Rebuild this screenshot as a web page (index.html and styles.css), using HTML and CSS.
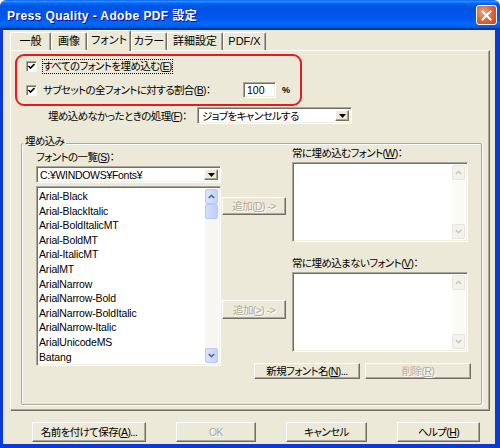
FILE: index.html
```html
<!DOCTYPE html>
<html lang="ja">
<head>
<meta charset="utf-8">
<title>Press Quality - Adobe PDF 設定</title>
<link rel="stylesheet" href="styles.css">
</head>
<body>
<div class="window">
  <div class="titlebar">
    <span class="title">Press Quality - Adobe PDF 設定</span>
    <span class="close"><svg width="13" height="13" viewBox="0 0 13 13"><path d="M2.5 2.5 L10.5 10.5 M10.5 2.5 L2.5 10.5" stroke="#fff" stroke-width="2" stroke-linecap="square"/></svg></span>
  </div>
  <div class="client">
    <div class="tabs">
      <div class="tab t1">一般</div>
      <div class="tab t2">画像</div>
      <div class="tab t3 active">フォント</div>
      <div class="tab t4">カラー</div>
      <div class="tab t5">詳細設定</div>
      <div class="tab t6">PDF/X</div>
    </div>
    <div class="panel">
      <div class="highlight">
        <div class="check-row">
          <span class="checkbox"><svg width="9" height="9" viewBox="0 0 9 9"><path d="M1.5 4 L3.5 6 L7.5 2" fill="none" stroke="#000" stroke-width="1.6"/></svg></span>
          <span class="label focus">すべてのフォントを埋め込む(<u>E</u>)</span>
        </div>
        <div class="check-row">
          <span class="checkbox"><svg width="9" height="9" viewBox="0 0 9 9"><path d="M1.5 4 L3.5 6 L7.5 2" fill="none" stroke="#000" stroke-width="1.6"/></svg></span>
          <span class="label subset-label">サブセットの全フォントに対する割合(<u>B</u>)：</span>
          <span class="textbox sunken">100</span>
          <span class="pct">%</span>
        </div>
      </div>
      <div class="fail-row">
        <span class="fail-label">埋め込めなかったときの処理(<u>F</u>)：</span>
        <div class="combo sunken fail-combo">
          <span class="combo-text">ジョブをキャンセルする</span>
          <span class="drop-btn raised"><svg width="7" height="4" viewBox="0 0 7 4"><path d="M0 0 H7 L3.5 4 Z" fill="#000"/></svg></span>
        </div>
      </div>
      <div class="group">
        <span class="legend">埋め込み</span>
        <div class="group-body">
          <div class="col-left">
            <div class="lbl list-lbl">フォントの一覧(<u>S</u>)：</div>
            <div class="combo sunken path-combo">
              <span class="combo-text">C:¥WINDOWS¥Fonts¥</span>
              <span class="drop-btn raised"><svg width="7" height="4" viewBox="0 0 7 4"><path d="M0 0 H7 L3.5 4 Z" fill="#000"/></svg></span>
            </div>
            <div class="listbox sunken font-list">
              <ul class="items">
                <li>Arial-Black</li>
                <li>Arial-BlackItalic</li>
                <li>Arial-BoldItalicMT</li>
                <li>Arial-BoldMT</li>
                <li>Arial-ItalicMT</li>
                <li>ArialMT</li>
                <li>ArialNarrow</li>
                <li>ArialNarrow-Bold</li>
                <li>ArialNarrow-BoldItalic</li>
                <li>ArialNarrow-Italic</li>
                <li>ArialUnicodeMS</li>
                <li>Batang</li>
              </ul>
              <div class="sb">
                <span class="sb-btn"><svg width="7" height="5" viewBox="0 0 7 5"><path d="M0.8 4 L3.5 1.3 L6.2 4" fill="none" stroke="#4D6185" stroke-width="1.5"/></svg></span>
                <span class="sb-thumb"></span>
                <span class="sb-track"></span>
                <span class="sb-btn"><svg width="7" height="5" viewBox="0 0 7 5"><path d="M0.8 1 L3.5 3.7 L6.2 1" fill="none" stroke="#4D6185" stroke-width="1.5"/></svg></span>
              </div>
            </div>
          </div>
          <div class="col-right">
            <div class="pairs">
              <div class="mid">
                <button class="btn raised add1" disabled>追加(<u>D</u>) -&gt;</button>
                <button class="btn raised add2" disabled>追加(<u>&gt;</u>) -&gt;</button>
              </div>
              <div class="lists">
                <div class="lbl">常に埋め込むフォント(<u>W</u>)：</div>
                <div class="listbox sunken side-list">
                  <div class="items"></div>
                  <div class="sb sb-off">
                    <span class="sb-btn"><svg width="7" height="5" viewBox="0 0 7 5"><path d="M0.8 4 L3.5 1.3 L6.2 4" fill="none" stroke="#C9C7BA" stroke-width="1.5"/></svg></span>
                    <span class="sb-track"></span>
                    <span class="sb-btn"><svg width="7" height="5" viewBox="0 0 7 5"><path d="M0.8 1 L3.5 3.7 L6.2 1" fill="none" stroke="#C9C7BA" stroke-width="1.5"/></svg></span>
                  </div>
                </div>
                <div class="lbl lbl2">常に埋め込まないフォント(<u>V</u>)：</div>
                <div class="listbox sunken side-list">
                  <div class="items"></div>
                  <div class="sb sb-off">
                    <span class="sb-btn"><svg width="7" height="5" viewBox="0 0 7 5"><path d="M0.8 4 L3.5 1.3 L6.2 4" fill="none" stroke="#C9C7BA" stroke-width="1.5"/></svg></span>
                    <span class="sb-track"></span>
                    <span class="sb-btn"><svg width="7" height="5" viewBox="0 0 7 5"><path d="M0.8 1 L3.5 3.7 L6.2 1" fill="none" stroke="#C9C7BA" stroke-width="1.5"/></svg></span>
                  </div>
                </div>
              </div>
            </div>
            <div class="actions">
              <button class="btn raised act">新規フォント名(<u>N</u>)...</button>
              <button class="btn raised act" disabled>削除(<u>R</u>)</button>
            </div>
          </div>
        </div>
      </div>
    </div>
    <div class="footer">
      <button class="btn raised f-save">名前を付けて保存(<u>A</u>)...</button>
      <button class="btn raised f-ok" disabled>OK</button>
      <button class="btn raised f-cancel">キャンセル</button>
      <button class="btn raised f-help">ヘルプ(<u>H</u>)</button>
    </div>
  </div>
</div>
</body>
</html>
```
FILE: styles.css
```css
* { box-sizing: border-box; }
html, body { margin: 0; padding: 0; }
body {
  width: 500px;
  height: 448px;
  overflow: hidden;
  background: #fff;
  font-family: "Liberation Sans", "Noto Sans CJK JP", sans-serif;
  font-size: 10.5px;
  letter-spacing: -0.6px;
  color: #000;
  font-feature-settings: "palt";
}
u { text-decoration: underline; text-underline-offset: 1px; }

.window {
  width: 500px;
  height: 448px;
  display: flex;
  flex-direction: column;
  border-radius: 6px 6px 0 0;
  overflow: hidden;
}

.titlebar {
  height: 30px;
  flex: none;
  display: flex;
  align-items: center;
  padding: 0 3px 0 7px;
  background: linear-gradient(to bottom, #0058EE 0%, #3593FF 4%, #288EFF 6%, #127DFF 8%, #036FFC 10%, #0262EE 14%, #0057E5 20%, #0054E3 24%, #0055EB 56%, #005BF5 66%, #026AFE 76%, #0062EF 86%, #0052D6 92%, #0040AB 94%, #003092 100%);
}
.title {
  flex: 1;
  color: #fff;
  font-weight: bold;
  font-size: 12px;
  letter-spacing: 0.4px;
  line-height: 16px;
  padding-top: 1px;
  text-shadow: 1px 1px #0F1089;
  white-space: nowrap;
}
.close {
  width: 21px;
  height: 20px;
  display: flex;
  align-items: center;
  justify-content: center;
  border: 1px solid #fff;
  border-radius: 3px;
  background: radial-gradient(circle at 35% 35%, #F0A58A 0%, #E2693F 45%, #C8411B 100%);
}

.client {
  flex: 1;
  display: flex;
  flex-direction: column;
  background: #ECE9D8;
  border-style: solid;
  border-color: #0A3BD8;
  border-width: 0 5px 4px 3px;
}

/* tabs */
.tabs {
  display: flex;
  align-items: flex-end;
  height: 21px;
  margin-bottom: -1px;
  padding-left: 7px;
  position: relative;
  z-index: 1;
}
.tab {
  height: 18px;
  margin-bottom: 1px;
  padding: 0;
  font-size: 11px;
  letter-spacing: 0;
  line-height: 17px;
  text-align: center;
  white-space: nowrap;
  border-top: 1px solid #fff;
  border-left: 1px solid #fff;
  border-right: 1px solid #716F64;
  box-shadow: inset -1px 0 #ACA899;
  border-radius: 2px 2px 0 0;
  background: #ECE9D8;
}
.t1 { width: 41px; }
.t2 { width: 36px; }
.t3 { width: 44px; }
.t4 { width: 36px; }
.t5 { width: 56px; }
.t6 { width: 43px; }
.tab.active {
  height: 21px;
  margin-bottom: 0;
  line-height: 18px;
  position: relative;
}

.panel {
  height: 361px;
  margin: 0 5px 0 7px;
  border: 1px solid;
  border-color: #fff #716F64 #716F64 #fff;
  box-shadow: inset -1px -1px #ACA899;
  display: flex;
  flex-direction: column;
}

/* red annotation box */
.highlight {
  margin: 3px 0 0 4px;
  width: 287px;
  height: 52px;
  border: 2px solid #E81B1B;
  border-radius: 9px;
  padding-top: 2px;
  display: flex;
  flex-direction: column;
  gap: 8px;
}
.check-row {
  height: 16px;
  display: flex;
  align-items: center;
  padding-left: 9px;
}
.checkbox {
  width: 11px;
  height: 11px;
  flex: none;
  display: flex;
  align-items: center;
  justify-content: center;
  background: #fff;
  border: 1px solid;
  border-color: #ACA899 #fff #fff #ACA899;
  box-shadow: inset 1px 1px #716F64;
  margin-right: 6px;
}
.label { line-height: 13px; white-space: nowrap; }
.focus { outline: 1px dotted #000; outline-offset: 0; }
.subset-label { width: 200px; flex: none; }
.textbox {
  width: 33px;
  height: 16px;
  line-height: 14px;
  padding-left: 3px;
  letter-spacing: 0;
  flex: none;
}
.pct { margin-left: 6px; font-size: 9px; font-weight: bold; letter-spacing: 0; }

.sunken {
  background: #fff;
  border: 1px solid;
  border-color: #ACA899 #fff #fff #ACA899;
  box-shadow: inset 1px 1px #716F64, inset -1px -1px #F1EFE2;
}
.raised {
  background: #ECE9D8;
  border: 1px solid;
  border-color: #fff #716F64 #716F64 #fff;
  box-shadow: inset -1px -1px #ACA899;
}

.fail-row {
  margin-top: 1px;
  height: 17px;
  display: flex;
  align-items: center;
  padding-left: 37px;
}
.fail-label { width: 149px; flex: none; white-space: nowrap; overflow: hidden; }

.combo {
  display: flex;
  align-items: stretch;
  padding: 2px;
  flex: none;
}
.fail-combo { width: 155px; height: 17px; }
.combo-text { flex: 1; line-height: 13px; padding-left: 2px; white-space: nowrap; overflow: hidden; }
.drop-btn {
  width: 14px;
  flex: none;
  display: flex;
  align-items: center;
  justify-content: center;
}

/* group box */
.group {
  margin: 19px 0 0 10px;
  width: 461px;
  height: 262px;
  border: 1px solid #ACA899;
  box-shadow: inset 1px 1px #fff, 1px 1px #fff;
  border-radius: 2px;
  display: flex;
  flex-direction: column;
}
.legend {
  align-self: flex-start;
  margin: -10px 0 -2px 1px;
  padding: 0 2px;
  line-height: 14px;
  background: #ECE9D8;
}
.group-body {
  display: flex;
  gap: 1px;
  padding-left: 14px;
}
.col-left { width: 185px; display: flex; flex-direction: column; }
.lbl { line-height: 14px; white-space: nowrap; }
.list-lbl { margin-top: 4px; }
.path-combo { margin-top: 2px; height: 17px; }
.path-combo .combo-text { padding-left: 1px; letter-spacing: -0.3px; }

.listbox {
  display: flex;
  padding: 2px;
}
.font-list { margin-top: 3px; height: 180px; }
.items {
  flex: 1;
  list-style: none;
  margin: 0;
  padding: 0;
  font-size: 10.5px;
  letter-spacing: -0.15px;
  overflow: hidden;
}
.items li { height: 14.6px; line-height: 14.6px; white-space: nowrap; }

.sb {
  width: 13px;
  flex: none;
  display: flex;
  flex-direction: column;
  background: #F7F6F1;
}
.sb-btn {
  height: 15px;
  flex: none;
  display: flex;
  align-items: center;
  justify-content: center;
  border: 1px solid #B7CAF5;
  border-radius: 2px;
  background: linear-gradient(to right, #D9E4FD, #C2D3FB);
}
.sb-thumb {
  height: 15px;
  flex: none;
  border: 1px solid #B7CAF5;
  border-radius: 2px;
  background: linear-gradient(to right, #D3DEFC, #BCCEFA);
}
.sb-track { flex: 1; }
.sb-off { background: #FAFAF7; }
.sb-off .sb-btn {
  border-color: #E8E6DC;
  background: #F3F2EC;
}

.col-right { width: 249px; display: flex; flex-direction: column; }
.pairs { display: flex; gap: 6px; }
.mid { width: 64px; display: flex; flex-direction: column; }
.lists { width: 176px; display: flex; flex-direction: column; }
.side-list { margin-top: 2px; height: 80px; }
.lbl2 { margin-top: 14px; }

.btn {
  font: inherit;
  letter-spacing: inherit;
  font-feature-settings: "palt";
  color: #000;
  padding: 0;
  margin: 0;
  white-space: nowrap;
  line-height: 14px;
}
.btn:disabled { color: #ACA899; text-shadow: 1px 1px #fff; }
.add1 { margin-top: 51px; height: 18px; }
.add2 { margin-top: 85px; height: 19px; }

.actions { display: flex; gap: 5px; margin: 11px 0 0 32px; }
.act { width: 106px; height: 16px; }

.footer {
  display: flex;
  gap: 30px;
  margin-top: 11px;
  padding-left: 29px;
}
.footer .btn { height: 20px; }
.f-save { width: 114px; }
.f-ok { width: 80px; }
.f-cancel { width: 81px; }
.f-help { width: 83px; }
```
